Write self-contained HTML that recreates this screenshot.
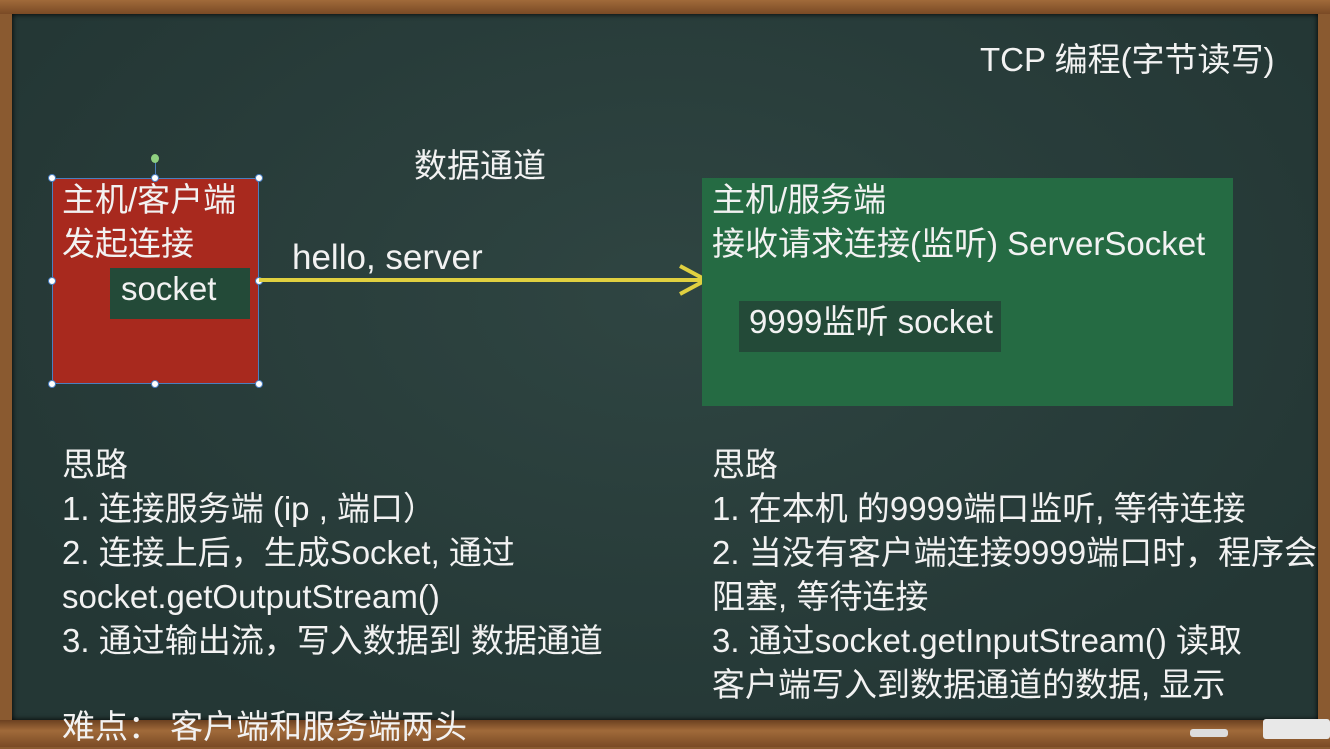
<!DOCTYPE html><html><head><meta charset="utf-8"><style>
body{margin:0;width:1330px;height:747px;overflow:hidden;background:#8a5a30;font-family:"Liberation Sans","Noto Sans CJK SC",sans-serif;position:relative}
.board{position:absolute;left:12px;top:14px;width:1306px;height:706px;background:radial-gradient(ellipse at 50% 40%,#2f4542,#243735 80%);box-shadow:inset 0 0 6px #000}
.t{position:absolute;color:#f2f2f2;font-size:33px;line-height:44px;white-space:nowrap}
.h{position:absolute;width:6px;height:6px;border-radius:50%;background:#fff;border:1px solid #4a7fc0}
</style></head><body>
<div style="position:absolute;left:0;top:0;width:1330px;height:14px;background:linear-gradient(#a06a3a,#7a4a25)"></div>
<div style="position:absolute;left:0;top:720px;width:1330px;height:27px;background:linear-gradient(#6b4020,#a06a3a 40%,#7a4a25)"></div>
<div class="board"></div>
<div style="position:absolute;left:1190px;top:729px;width:38px;height:8px;background:#ddd;border-radius:3px"></div>
<div style="position:absolute;left:1263px;top:719px;width:67px;height:20px;background:#e8e8e8;border-radius:3px"></div>
<div class="t" style="left:980px;top:38px">TCP 编程(字节读写)</div>
<div class="t" style="left:414px;top:144px">数据通道</div>
<div style="position:absolute;left:52px;top:178px;width:207px;height:206px;background:#a8291e;border:1px solid #4a7fc0;box-sizing:border-box"></div>
<div class="t" style="left:62px;top:178px">主机/客户端<br>发起连接</div>
<div style="position:absolute;left:110px;top:268px;width:140px;height:51px;background:#234a38"></div>
<div class="t" style="left:121px;top:267px">socket</div>
<div style="position:absolute;left:155px;top:160px;width:1px;height:18px;background:#4a7fc0"></div>
<div style="position:absolute;left:151px;top:154px;width:8px;height:9px;border-radius:50%;background:#8fd080"></div>
<div class="h" style="left:48px;top:174px"></div><div class="h" style="left:151px;top:174px"></div><div class="h" style="left:255px;top:174px"></div>
<div class="h" style="left:48px;top:277px"></div><div class="h" style="left:255px;top:277px"></div>
<div class="h" style="left:48px;top:380px"></div><div class="h" style="left:151px;top:380px"></div><div class="h" style="left:255px;top:380px"></div>
<svg style="position:absolute;left:0;top:0" width="1330" height="747"><path d="M259 280H705M680 266L706 280L680 294" stroke="#e0d040" stroke-width="4" fill="none"/></svg>
<div class="t" style="left:292px;top:236px;font-size:35px">hello, server</div>
<div style="position:absolute;left:702px;top:178px;width:531px;height:228px;background:#256b43"></div>
<div class="t" style="left:712px;top:178px">主机/服务端<br>接收请求连接(监听) ServerSocket</div>
<div style="position:absolute;left:739px;top:301px;width:262px;height:51px;background:#234a38"></div>
<div class="t" style="left:749px;top:300px">9999监听 socket</div>
<div class="t" style="left:62px;top:443px">思路<br>1. 连接服务端 (ip , 端口）<br>2. 连接上后，生成Socket, 通过<br>socket.getOutputStream()<br>3. 通过输出流，写入数据到 数据通道</div>
<div class="t" style="left:62px;top:705px">难点：&nbsp;客户端和服务端两头</div>
<div class="t" style="left:712px;top:443px">思路<br>1. 在本机 的9999端口监听, 等待连接<br>2. 当没有客户端连接9999端口时，程序会<br>阻塞, 等待连接<br>3. 通过socket.getInputStream() 读取<br>客户端写入到数据通道的数据, 显示</div>
</body></html>
